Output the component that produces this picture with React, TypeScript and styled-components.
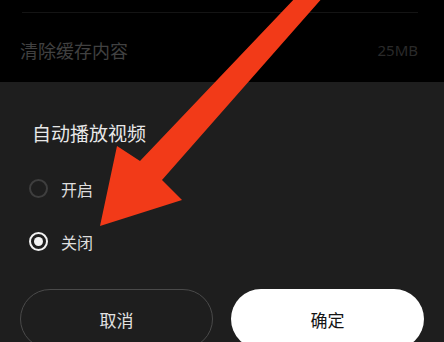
import styled, { createGlobalStyle } from "styled-components";

const GlobalStyle = createGlobalStyle`
  html, body {
    margin: 0;
    padding: 0;
    background: #000;
  }
  body {
    width: 444px;
    height: 342px;
    overflow: hidden;
    font-family: "Noto Sans CJK SC", "Noto Sans", sans-serif;
  }
`;

const Page = styled.div`
  position: relative;
  width: 444px;
  height: 342px;
  overflow: hidden;
  background: #000;
`;

const Behind = styled.div`
  height: 82px;
  padding: 0 26px 0 20px;
  box-sizing: border-box;
  overflow: hidden;
`;

const Divider = styled.div`
  height: 1px;
  margin: 12px 0 0 2px;
  background: #141414;
`;

const SettingRow = styled.div`
  display: flex;
  align-items: center;
  justify-content: space-between;
  height: 50px;
  margin-top: 12px;
`;

const SettingLabel = styled.span`
  font-size: 18px;
  color: #414141;
`;

const SettingValue = styled.span`
  font-family: "Noto Sans", sans-serif;
  font-size: 15px;
  color: #2a2a2a;
`;

const Sheet = styled.div`
  height: 260px;
  background: #1e1e1e;
  padding: 38px 20px 0;
  box-sizing: border-box;
`;

const Title = styled.div`
  font-size: 19px;
  line-height: 26px;
  color: #e8e8e8;
  margin: 0 0 16px 12px;
`;

const Option = styled.div`
  display: flex;
  align-items: center;
  gap: 13px;
  height: 53px;
  padding-left: 9px;
`;

const Radio = styled.span<{ $checked?: boolean }>`
  box-sizing: border-box;
  width: 19px;
  height: 19px;
  border-radius: 50%;
  border: 2px solid ${(p) => (p.$checked ? "#f2f2f2" : "#3e3e3e")};
  display: flex;
  align-items: center;
  justify-content: center;

  &::after {
    content: "";
    width: 9px;
    height: 9px;
    border-radius: 50%;
    background: #f2f2f2;
    display: ${(p) => (p.$checked ? "block" : "none")};
  }
`;

const OptionText = styled.span`
  font-size: 16px;
  color: #dedede;
`;

const Actions = styled.div`
  display: grid;
  grid-template-columns: 1fr 1fr;
  gap: 18px;
  margin-top: 21px;
`;

const Button = styled.button<{ $primary?: boolean }>`
  height: 60px;
  border-radius: 30px;
  box-sizing: border-box;
  font-family: inherit;
  font-size: 17px;
  border: ${(p) => (p.$primary ? "none" : "1.5px solid #4a4a4a")};
  background: ${(p) => (p.$primary ? "#fff" : "transparent")};
  color: ${(p) => (p.$primary ? "#141414" : "#e2e2e2")};
`;

const Arrow = styled.svg`
  position: absolute;
  left: 0;
  top: 0;
  pointer-events: none;
`;

export default function App() {
  return (
    <Page>
      <GlobalStyle />
      <Behind>
        <Divider />
        <SettingRow>
          <SettingLabel>清除缓存内容</SettingLabel>
          <SettingValue>25MB</SettingValue>
        </SettingRow>
      </Behind>
      <Sheet>
        <Title>自动播放视频</Title>
        <Option>
          <Radio />
          <OptionText>开启</OptionText>
        </Option>
        <Option>
          <Radio $checked />
          <OptionText>关闭</OptionText>
        </Option>
        <Actions>
          <Button>取消</Button>
          <Button $primary>确定</Button>
        </Actions>
      </Sheet>
      <Arrow width="444" height="342" viewBox="0 0 444 342">
        <polygon
          points="297,-4 324,-4 162,180 182,200 100,226 117,146 140,161"
          fill="#f23a18"
          strokeLinejoin="round"
        />
      </Arrow>
    </Page>
  );
}
